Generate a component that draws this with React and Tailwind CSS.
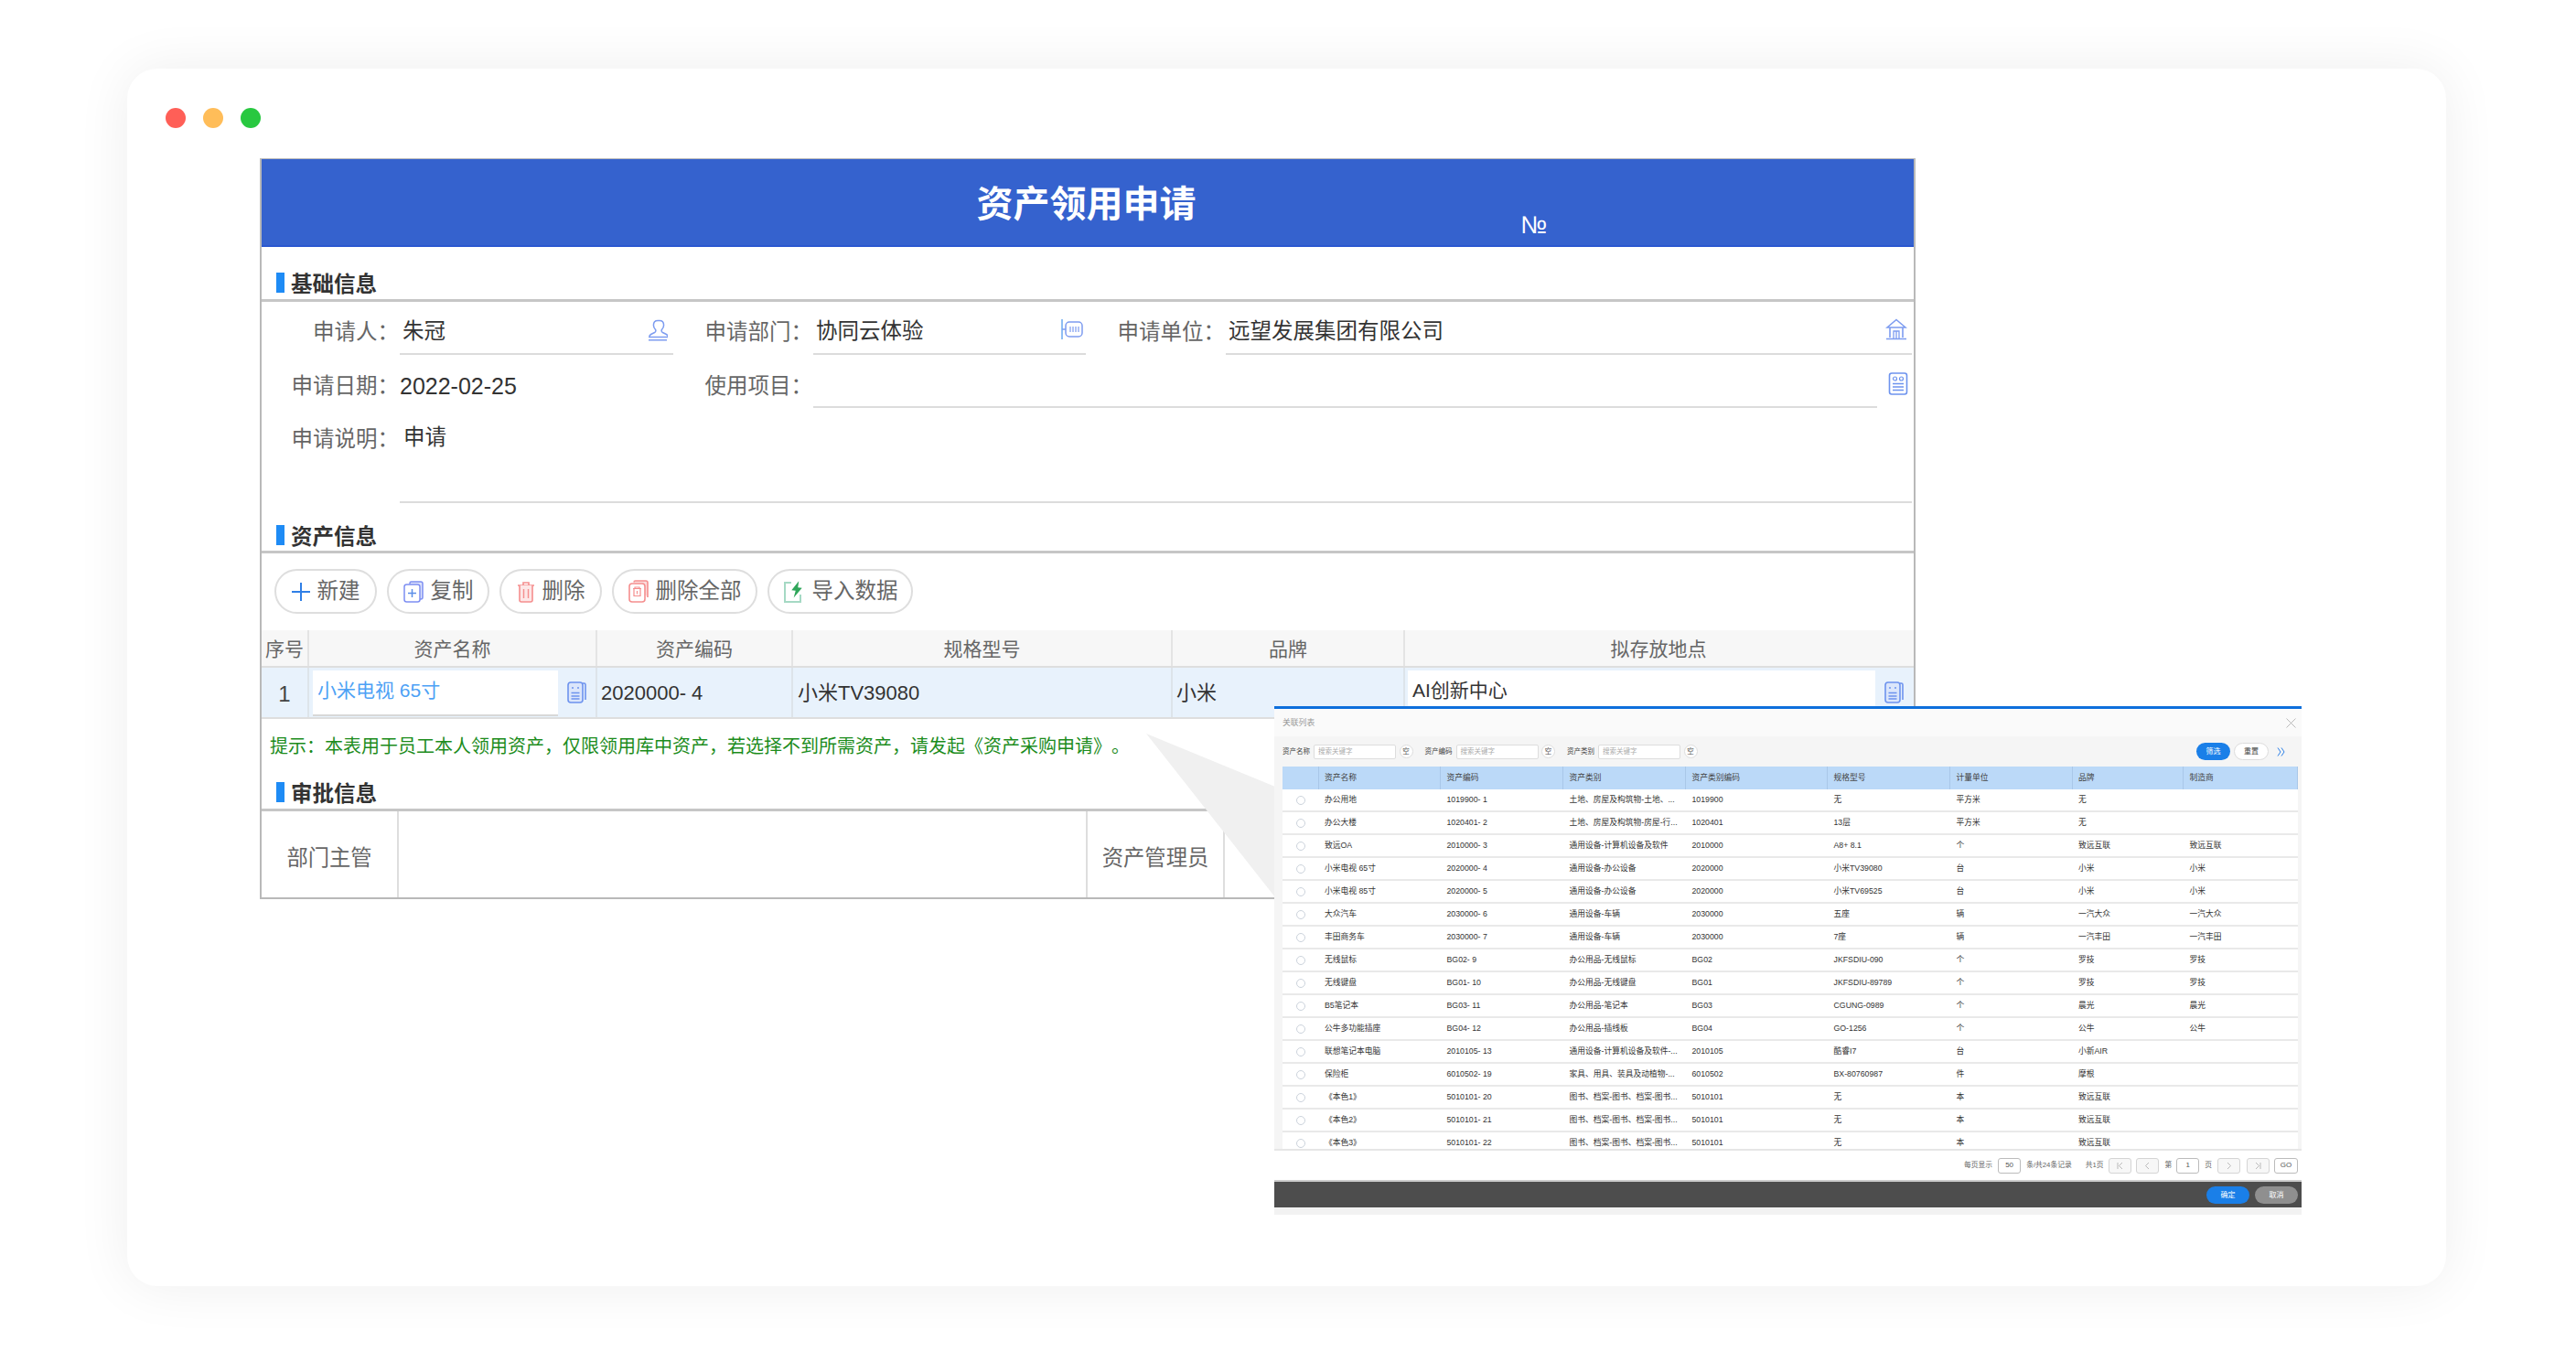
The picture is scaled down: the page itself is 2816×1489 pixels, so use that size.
import React from "react";

const UserIcon = () => (
  <svg width="22" height="24" viewBox="0 0 22 24" fill="none" stroke="#7d9cf0" strokeWidth="1.5"><path d="M11 1.500c-3 0-4.600 2.300-4.600 5 0 2.200 1 3.700 2.200 5 .6 1 .2 2.300-1 3l-4 2c-1.200.6-1.800 1.500-1.800 3h20.400c0-1.500-.6-2.400-1.800-3l-4-2c-1.200-.7-1.600-2-1-3 1.200-1.300 2.200-2.800 2.200-5 0-2.700-1.600-5-4.600-5z"/><path d="M1 22.800h20"/></svg>
);
const DeptIcon = () => (
  <svg width="24" height="24" viewBox="0 0 24 24" fill="none" stroke="#7d9cf0" strokeWidth="1.500"><path d="M1 1v22" stroke="#6aa8f0"/><path d="M1 12h4"/><rect x="5" y="4" width="18" height="16" rx="4"/><path d="M10 9v6M13 9v6M16 9v6M19 9v6" strokeWidth="1.200"/></svg>
);
const BankIcon = () => (
  <svg width="24" height="24" viewBox="0 0 24 24" fill="none" stroke="#7d9cf0" strokeWidth="1.600"><path d="M12 1.500 22 10H2z"/><path d="M5 10v11M19 10v11M1 22.500h22"/><path d="M9 22v-8h6v8M12 14v8" strokeWidth="1.300"/></svg>
);
const DocIcon = () => (
  <svg width="22" height="25" viewBox="0 0 22 25" fill="none" stroke="#6d93ee" strokeWidth="1.600"><rect x="1.500" y="1" width="19" height="23" rx="2.500"/><circle cx="7.500" cy="7" r="2" strokeWidth="1.200"/><circle cx="14.500" cy="7" r="2" strokeWidth="1.200"/><path d="M5 12.500h12M5 16h12M5 19.500h12" strokeWidth="1.300"/></svg>
);
const SheetIcon = () => (
  <svg width="21" height="24" viewBox="0 0 21 24" fill="none" stroke="#6d93ee" strokeWidth="1.600"><path d="M17 2h1.500A1.500 1.500 0 0 1 20 3.500V20"/><rect x="1" y="1" width="16" height="22" rx="3" fill="#dbe6fb"/><circle cx="6" cy="7" r="1" fill="#6d93ee" stroke="none"/><circle cx="12" cy="7" r="1" fill="#6d93ee" stroke="none"/><path d="M4.500 12.500h9M4.500 16h9M4.500 19h9" strokeWidth="1.300"/></svg>
);
const PlusIcon = () => (
  <svg width="20" height="20" viewBox="0 0 20 20" stroke="#2f7fe6" strokeWidth="2"><path d="M10 0v20M0 10h20"/></svg>
);
const CopyIcon = () => (
  <svg width="22" height="24" viewBox="0 0 22 24" fill="none" stroke="#7e8ff2" strokeWidth="1.500"><path d="M7 3.500V2.500A1.500 1.500 0 0 1 8.500 1H19a2 2 0 0 1 2 2v15a2 2 0 0 1-2 2h-1" fill="#dfe4fb"/><rect x="1" y="4" width="17" height="19" rx="2.500" fill="#fff"/><path d="M9.500 9v9M5 13.500h9" stroke="#5b8ee8"/></svg>
);
const TrashIcon = () => (
  <svg width="20" height="24" viewBox="0 0 20 24" fill="none" stroke="#f58e8e" strokeWidth="1.600"><path d="M1 5h18M7 5V2h6v3" /><path d="M3 5v16a2 2 0 0 0 2 2h10a2 2 0 0 0 2-2V5" fill="#fde7e7"/><path d="M7.500 9v10M12.500 9v10" strokeWidth="1.400"/></svg>
);
const TrashAllIcon = () => (
  <svg width="22" height="25" viewBox="0 0 22 25" fill="none" stroke="#f58e8e" strokeWidth="1.600"><path d="M6 2.500A1.500 1.500 0 0 1 7.500 1H19a2 2 0 0 1 2 2v16" fill="#fbdcdc"/><rect x="1" y="4" width="17" height="20" rx="3" fill="#fff"/><path d="M5 9.500h9M7 9.500V8h5v1.500M6 9.500v8h7v-8M9.500 12v3.500" strokeWidth="1.200"/></svg>
);
const ImportIcon = () => (
  <svg width="24" height="26" viewBox="0 0 24 26" fill="none"><path d="M9 3H2v21h17v-8" stroke="#a5d9c4" strokeWidth="2"/><path d="M16 1l-6.500 11h4.500l-1 8 7.500-12h-4.500z" fill="#2fa65a" transform="rotate(8 15 10)"/></svg>
);

const Section = ({ title, h, pb }) => (
  <div className={`flex items-end pl-[16px] border-b-[3px] border-[#c6c6c6] ${h} ${pb}`}>
    <span className="w-[9px] h-[22px] bg-[#1e8bf5] mr-[7px]" />
    <span className="text-[23.500px] leading-[22px] font-bold text-[#333] -mb-[2px]">{title}</span>
  </div>
);

const Label = ({ children, w }) => (
  <div className={`${w} shrink-0 pr-[1px] text-right text-[23.500px] leading-[24px] text-[#666]`}>{children}</div>
);

const toolbar = [
  { icon: <PlusIcon />, text: "新建", w: "w-[112px]" },
  { icon: <CopyIcon />, text: "复制", w: "w-[112px]" },
  { icon: <TrashIcon />, text: "删除", w: "w-[112px]" },
  { icon: <TrashAllIcon />, text: "删除全部", w: "w-[159px]" },
  { icon: <ImportIcon />, text: "导入数据", w: "w-[159px]" },
];

const heads = ["序号", "资产名称", "资产编码", "规格型号", "品牌", "拟存放地点"];

const rows = [
  ["办公用地", "1019900- 1", "土地、房屋及构筑物-土地、...", "1019900", "无", "平方米", "无", ""],
  ["办公大楼", "1020401- 2", "土地、房屋及构筑物-房屋-行...", "1020401", "13层", "平方米", "无", ""],
  ["致远OA", "2010000- 3", "通用设备-计算机设备及软件", "2010000", "A8+ 8.1", "个", "致远互联", "致远互联"],
  ["小米电视 65寸", "2020000- 4", "通用设备-办公设备", "2020000", "小米TV39080", "台", "小米", "小米"],
  ["小米电视 85寸", "2020000- 5", "通用设备-办公设备", "2020000", "小米TV69525", "台", "小米", "小米"],
  ["大众汽车", "2030000- 6", "通用设备-车辆", "2030000", "五座", "辆", "一汽大众", "一汽大众"],
  ["丰田商务车", "2030000- 7", "通用设备-车辆", "2030000", "7座", "辆", "一汽丰田", "一汽丰田"],
  ["无线鼠标", "BG02- 9", "办公用品-无线鼠标", "BG02", "JKFSDIU-090", "个", "罗技", "罗技"],
  ["无线键盘", "BG01- 10", "办公用品-无线键盘", "BG01", "JKFSDIU-89789", "个", "罗技", "罗技"],
  ["B5笔记本", "BG03- 11", "办公用品-笔记本", "BG03", "CGUNG-0989", "个", "晨光", "晨光"],
  ["公牛多功能插座", "BG04- 12", "办公用品-插线板", "BG04", "GO-1256", "个", "公牛", "公牛"],
  ["联想笔记本电脑", "2010105- 13", "通用设备-计算机设备及软件-...", "2010105", "酷睿I7", "台", "小新AIR", ""],
  ["保险柜", "6010502- 19", "家具、用具、装具及动植物-...", "6010502", "BX-80760987", "件", "摩根", ""],
  ["《本色1》", "5010101- 20", "图书、档案-图书、档案-图书...", "5010101", "无", "本", "致远互联", ""],
  ["《本色2》", "5010101- 21", "图书、档案-图书、档案-图书...", "5010101", "无", "本", "致远互联", ""],
  ["《本色3》", "5010101- 22", "图书、档案-图书、档案-图书...", "5010101", "无", "本", "致远互联", ""],
];
const popHeads = ["资产名称", "资产编码", "资产类别", "资产类别编码", "规格型号", "计量单位", "品牌", "制造商"];
const popGrid = "grid grid-cols-[39.500px_133.500px_134px_134px_155px_134px_133.500px_121.500px_125px]";

const Filter = ({ label }) => (
  <div className="flex items-center w-[155.500px] shrink-0">
    <span className="w-[34px] text-[7.500px] text-[#444]">{label}</span>
    <span className="w-[90px] h-[16px] bg-white border border-[#ddd] rounded-[2px] pl-[4px] text-[7.500px] leading-[14px] text-[#aaa]">搜索关键字</span>
    <span className="ml-[3.500px] w-[15px] h-[15px] rounded-full bg-white border border-[#ddd] text-[7.500px] leading-[13px] text-center text-[#555]">空</span>
  </div>
);

const PageBtn = ({ children, ml, w = "w-[25px]", dim }) => (
  <span className={`${ml} ${w} h-[17px] flex items-center justify-center rounded-[3px] border ${dim ? "border-[#d4d4d4] bg-[#f7f7f7] text-[#aaa]" : "border-[#bbb] bg-white text-[#555]"} text-[8px]`}>{children}</span>
);

const Chevron = ({ d }) => (
  <svg width="9" height="9" viewBox="0 0 9 9" fill="none" stroke="#aaa" strokeWidth="0.800"><path d={d} /></svg>
);

export default function App() {
  return (
    <div className="min-h-[1489px] bg-white pt-[75px] pl-[139px] font-['Liberation_Sans','Noto_Sans_CJK_SC',sans-serif] [text-spacing-trim:space-all]">
      <div className="relative w-[2535px] h-[1331px] rounded-[33px] bg-white shadow-[0_0_60px_rgba(0,0,0,0.07)] pt-[43px] pl-[42px]">
        <div className="flex gap-[19px]">
          <span className="w-[22px] h-[22px] rounded-full bg-[#ff5f57]" />
          <span className="w-[22px] h-[22px] rounded-full bg-[#ffbd59]" />
          <span className="w-[22px] h-[22px] rounded-full bg-[#28c840]" />
        </div>

        {/* form */}
        <div className="ml-[103px] mt-[33px] w-[1810px] border-x-2 border-b-2 border-t border-[#b9b9b9]">
          <div className="relative h-[96px] bg-[#3562ce] border-b-2 border-[#2a57cf] flex items-center justify-center">
            <h1 className="text-[40px] leading-[44px] font-bold text-white -ml-[3px] mt-[4px]">资产领用申请</h1>
            <span className="absolute left-[1376px] top-[58px] text-[27px] leading-[28px] font-medium text-white">№</span>
          </div>

          <Section title="基础信息" h="h-[60px]" pb="pb-[7px]" />

          <div className="flex items-end h-[58px]">
            <div className="pb-[13px]"><Label w="w-[151px]">申请人：</Label></div>
            <div className="w-[299px] h-full flex items-end justify-between pl-[3px] pr-[6px] pb-[12px] border-b-2 border-[#dcdcdc] text-[23.500px] leading-[24px] text-[#333]">
              <span>朱冠</span><span className="mb-[1px]"><UserIcon /></span>
            </div>
            <div className="pb-[13px]"><Label w="w-[153px]">申请部门：</Label></div>
            <div className="w-[298px] h-full flex items-end justify-between pl-[3px] pr-[3px] pb-[12px] border-b-2 border-[#dcdcdc] text-[23.500px] leading-[24px] text-[#333]">
              <span>协同云体验</span><span className="mb-[2px]"><DeptIcon /></span>
            </div>
            <div className="pb-[13px]"><Label w="w-[153px]">申请单位：</Label></div>
            <div className="w-[750px] h-full flex items-end justify-between pl-[3px] pr-[5px] pb-[12px] border-b-2 border-[#dcdcdc] text-[23.500px] leading-[24px] text-[#333]">
              <span>远望发展集团有限公司</span><span className="mb-[2px]"><BankIcon /></span>
            </div>
          </div>

          <div className="flex items-end h-[58px]">
            <div className="pb-[12px]"><Label w="w-[151px]">申请日期：</Label></div>
            <div className="w-[299px] pb-[12px] text-[25px] leading-[24px] text-[#333]">2022-02-25</div>
            <div className="pb-[12px]"><Label w="w-[153px]">使用项目：</Label></div>
            <div className="w-[1163px] h-full border-b-2 border-[#dcdcdc]" />
            <div className="ml-[12px] mb-[14px]"><DocIcon /></div>
          </div>

          <div className="flex h-[104px] pt-[22px]">
            <Label w="w-[151px]">申请说明：</Label>
            <div className="w-[1653px] -mt-[22px] pt-[20px] pl-[4px] border-b-2 border-[#dcdcdc] text-[23.500px] leading-[24px] text-[#333]">申请</div>
          </div>

          <Section title="资产信息" h="h-[55px]" pb="pb-[6px]" />

          <div className="flex gap-[11px] pl-[14px] pt-[17px] pb-[18px]">
            {toolbar.map((b) => (
              <div key={b.text} className={`${b.w} h-[49px] rounded-full border-2 border-[#dedede] flex items-center justify-center gap-[8px] text-[23.500px] text-[#666]`}>
                {b.icon}<span>{b.text}</span>
              </div>
            ))}
          </div>

          <div className="grid grid-cols-[52px_315px_214px_415px_254px_554px] h-[41px] bg-[#f7f7f7] border-b-2 border-[#dedede]">
            {heads.map((h) => (
              <div key={h} className="flex items-center justify-center pt-[2px] border-r-2 border-[#e4e4e4] last:border-r-0 text-[21px] text-[#666]">{h}</div>
            ))}
          </div>
          <div className="grid grid-cols-[52px_315px_214px_415px_254px_554px] h-[56px] bg-[#e8f2fc] border-b-2 border-[#dedede] text-[22px] text-[#333]">
            <div className="flex items-center justify-center pt-[3px] border-r-2 border-[#dde4ea] text-[24px] text-[#444]">1</div>
            <div className="flex border-r-2 border-[#dde4ea] pt-[3px] pl-[4px]">
              <div className="w-[268px] h-[50px] bg-white border-b-2 border-[#d8d8d8] pl-[5px] pt-[8px] text-[21px] leading-[28px] text-[#4da1f5]">小米电视 65寸</div>
              <div className="flex-1 flex justify-center pt-[12px]"><SheetIcon /></div>
            </div>
            <div className="flex items-center pl-[4px] border-r-2 border-[#dde4ea]">2020000- 4</div>
            <div className="flex items-center pl-[5px] border-r-2 border-[#dde4ea]">小米TV39080</div>
            <div className="flex items-center pl-[4px] border-r-2 border-[#dde4ea]">小米</div>
            <div className="flex pt-[3px] pl-[3px]">
              <div className="w-[511px] h-[50px] bg-white pl-[5px] pt-[8px] text-[21px] leading-[28px]">AI创新中心</div>
              <div className="flex-1 flex justify-center pt-[12px]"><SheetIcon /></div>
            </div>
          </div>

          <div className="h-[64px] pt-[20px] pl-[9px] text-[20px] leading-[20px] text-[#1c8c1c]">提示：本表用于员工本人领用资产，仅限领用库中资产，若选择不到所需资产，请发起《资产采购申请》。</div>

          <Section title="审批信息" h="h-[37px]" pb="pb-[7px]" />

          <div className="grid grid-cols-[150px_753px_150px_1fr] h-[94px] text-[23.300px] text-[#666]">
            <div className="flex items-center justify-center pt-[9px] border-r-2 border-[#dedede]">部门主管</div>
            <div className="border-r-2 border-[#dedede]" />
            <div className="flex items-center justify-center pt-[9px] border-r-2 border-[#dedede]">资产管理员</div>
            <div />
          </div>
        </div>

        {/* callout wedge */}
        <svg className="absolute left-[1114px] top-[727px]" width="141" height="179" viewBox="0 0 141 179"><polygon points="0,0 141,58 141,179" fill="#f0f0f0" /></svg>

        {/* popup */}
        <div className="absolute left-[1254px] top-[697px] w-[1123px] h-[556px] flex flex-col bg-white border-t-[3px] border-[#0d6fdc]">
          <div className="h-[30px] shrink-0 flex items-center justify-between pl-[9px] pr-[6px] bg-[#fafafa]">
            <span className="text-[8.800px] text-[#999] mt-[1px]">关联列表</span>
            <svg width="11" height="11" viewBox="0 0 11 11" stroke="#aaa" strokeWidth="0.800"><path d="M.5.500l10 10M10.500.500l-10 10" /></svg>
          </div>
          <div className="h-[33px] shrink-0 flex items-center pl-[9px] bg-[#f5f5f5]">
            <Filter label="资产名称" />
            <Filter label="资产编码" />
            <Filter label="资产类别" />
            <span className="ml-auto w-[37px] h-[19px] rounded-full bg-[#1a7fe8] text-white text-[8px] leading-[19px] text-center">筛选</span>
            <span className="ml-[4px] w-[38px] h-[19px] rounded-full bg-white border border-[#ddd] text-[#444] text-[8px] leading-[17px] text-center">重置</span>
            <svg className="ml-[9px] mr-[18px]" width="9" height="10" viewBox="0 0 9 10" fill="none" stroke="#2a7fe8" strokeWidth="1"><path d="M1 .500 4 5 1 9.500M5 .500 8 5 5 9.500" /></svg>
          </div>
          <div className="h-[420px] shrink-0 overflow-hidden bg-[#f5f5f5] pl-[9px] pr-[4px] border-b-2 border-[#e6e6e6]">
            <div className={`${popGrid} h-[25px] bg-[#bbd9f8] text-[8.750px] text-[#444]`}>
              <div className="border-r border-[#a9c7e8]" />
              {popHeads.map((h) => (
                <div key={h} className="flex items-center pl-[6.500px] pt-[1px] border-r border-[#a9c7e8]">{h}</div>
              ))}
            </div>
            {rows.map((r) => (
              <div key={r[1]} className={`${popGrid} h-[25px] bg-white border-b-2 border-[#e9e9e9] text-[8.750px] text-[#333]`}>
                <div className="flex items-center justify-center pt-[1px]"><span className="w-[10px] h-[10px] rounded-full border border-[#ccd3dc]" /></div>
                {r.map((c, i) => (
                  <div key={i} className="flex items-center pl-[6.500px] pt-[1px] whitespace-nowrap overflow-hidden">{c}</div>
                ))}
              </div>
            ))}
          </div>
          <div className="h-[32px] shrink-0 flex items-center justify-end pr-[4px] bg-white text-[7.750px] text-[#666]">
            <span>每页显示</span>
            <PageBtn ml="ml-[6px]" w="w-[25px]">50</PageBtn>
            <span className="ml-[6px]">条/共24条记录</span>
            <span className="ml-[15px]">共1页</span>
            <PageBtn ml="ml-[6px]" dim><Chevron d="M2 1v7M7 1 3.500 4.500 7 8" /></PageBtn>
            <PageBtn ml="ml-[5px]" dim><Chevron d="M6 1 2.500 4.500 6 8" /></PageBtn>
            <span className="ml-[6px]">第</span>
            <PageBtn ml="ml-[5px]">1</PageBtn>
            <span className="ml-[6px]">页</span>
            <PageBtn ml="ml-[6px]" dim><Chevron d="M3 1l3.500 3.500L3 8" /></PageBtn>
            <PageBtn ml="ml-[7px]" dim><Chevron d="M7 1v7M2 1l3.500 3.500L2 8" /></PageBtn>
            <PageBtn ml="ml-[5px]" w="w-[26px]">GO</PageBtn>
          </div>
          <div className="h-[30px] shrink-0 flex items-center justify-end gap-[6px] pr-[4px] pt-[1px] bg-[#4d4d4d] border-t-2 border-[#ccc]">
            <span className="w-[47px] h-[19px] rounded-full bg-[#1a7fe8] text-white text-[8px] leading-[19px] text-center">确定</span>
            <span className="w-[47px] h-[19px] rounded-full bg-[#8f8f8f] text-white text-[8px] leading-[19px] text-center">取消</span>
          </div>
          <div className="flex-1 bg-[#f2f2f2]" />
        </div>
      </div>
    </div>
  );
}
